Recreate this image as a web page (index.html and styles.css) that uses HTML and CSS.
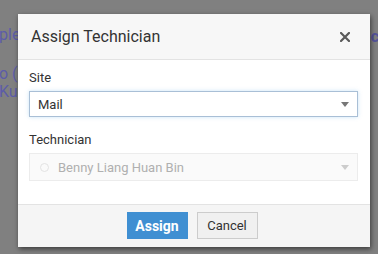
FILE: index.html
```html
<!DOCTYPE html>
<html lang="en">
<head>
    <meta charset="UTF-8">
    <title>Assign Technician</title>
    <link rel="stylesheet" href="styles.css">
</head>
<body>

    <div class="page">
        <div class="page-left">
            <div class="l1">ple</div>
            <div class="l2">o (K</div>
            <div class="l3">Ku</div>
        </div>
        <div class="page-right">c</div>
    </div>

    <div class="modal">
        <div class="modal-header">
            <h2>Assign Technician</h2>
            <svg class="close" width="10" height="10" viewBox="0 0 10 10">
                <path d="M1 1 L9 9 M9 1 L1 9" stroke="#5a5a5a" stroke-width="2.2" stroke-linecap="square"/>
            </svg>
        </div>
        <div class="modal-body">
            <div class="form-group">
                <label>Site</label>
                <div class="select focus">
                    <span>Mail</span>
                    <i class="caret"></i>
                </div>
            </div>
            <div class="form-group">
                <label>Technician</label>
                <div class="select disabled">
                    <span class="radio"></span>
                    <span>Benny Liang Huan Bin</span>
                    <i class="caret"></i>
                </div>
            </div>
        </div>
        <div class="modal-footer">
            <button type="button" class="btn btn-primary">Assign</button>
            <button type="button" class="btn">Cancel</button>
        </div>
    </div>

</body>
</html>
```

FILE: styles.css
```css
body {
    margin: 0;
    font-family: 'Roboto', sans-serif;
    background-color: #808080;
    height: 254px;
    overflow: hidden;
}
.page {
    display: flex;
    justify-content: space-between;
    height: 254px;
    color: #5c5ca8;
    font-size: 16px;
}
.page-left {
    padding-top: 26px;
    line-height: 18px;
    margin-left: -1px;
}
.page-left .l2 {
    margin-top: 21px;
}
.page-right {
    padding-top: 27px;
    margin-right: -1px;
    font-weight: 700;
    color: #55559c;
}
.modal {
    position: absolute;
    left: 18px;
    top: 14px;
    width: 352px;
    background-color: #fff;
    box-shadow: 1px 2px 5px rgba(0, 0, 0, 0.55);
}
.modal-header {
    display: flex;
    align-items: center;
    justify-content: space-between;
    height: 45px;
    padding: 0 20px 0 13px;
    background-color: #f7f7f7;
    border-bottom: 1px solid #e3e3e3;
}
.modal-header h2 {
    margin: 0;
    font-size: 16px;
    font-weight: 400;
    color: #333;
}
.modal-body {
    padding: 10px 12px 23px 11px;
}
.form-group {
    margin-bottom: 15px;
}
.form-group:last-child {
    margin-bottom: 0;
}
.form-group label {
    display: block;
    font-size: 13px;
    color: #333;
    margin-bottom: 6px;
}
.select {
    display: flex;
    align-items: center;
    height: 24px;
    padding: 0 8px;
    border: 1px solid #ccc;
    font-size: 13px;
    color: #333;
}
.select.focus {
    border-color: #a9bfd6;
    box-shadow: 0 0 4px rgba(102, 175, 233, 0.35);
}
.select.disabled {
    height: 26px;
    border-color: #ececec;
    background-color: #fafafa;
    color: #b0b0b0;
    padding-left: 10px;
}
.radio {
    width: 7px;
    height: 7px;
    border: 1px solid #e3e3e3;
    border-radius: 50%;
    margin-right: 9px;
}
.caret {
    margin-left: auto;
    width: 0;
    height: 0;
    border-left: 4px solid transparent;
    border-right: 4px solid transparent;
    border-top: 5px solid #777;
}
.disabled .caret {
    border-top-color: #ccc;
}
.modal-footer {
    display: flex;
    justify-content: center;
    gap: 9px;
    padding: 7px 4px 8px 0;
    background-color: #f5f5f5;
    border-top: 1px solid #e3e3e3;
}
.btn {
    width: 61px;
    height: 27px;
    font-family: 'Roboto', sans-serif;
    font-size: 13px;
    color: #333;
    background-color: #f0f0f0;
    border: 1px solid #ccc;
    cursor: pointer;
}
.btn-primary {
    background-color: #3f8fd2;
    border-color: #3f8fd2;
    color: #fff;
    font-weight: 700;
    font-size: 14px;
}
```
